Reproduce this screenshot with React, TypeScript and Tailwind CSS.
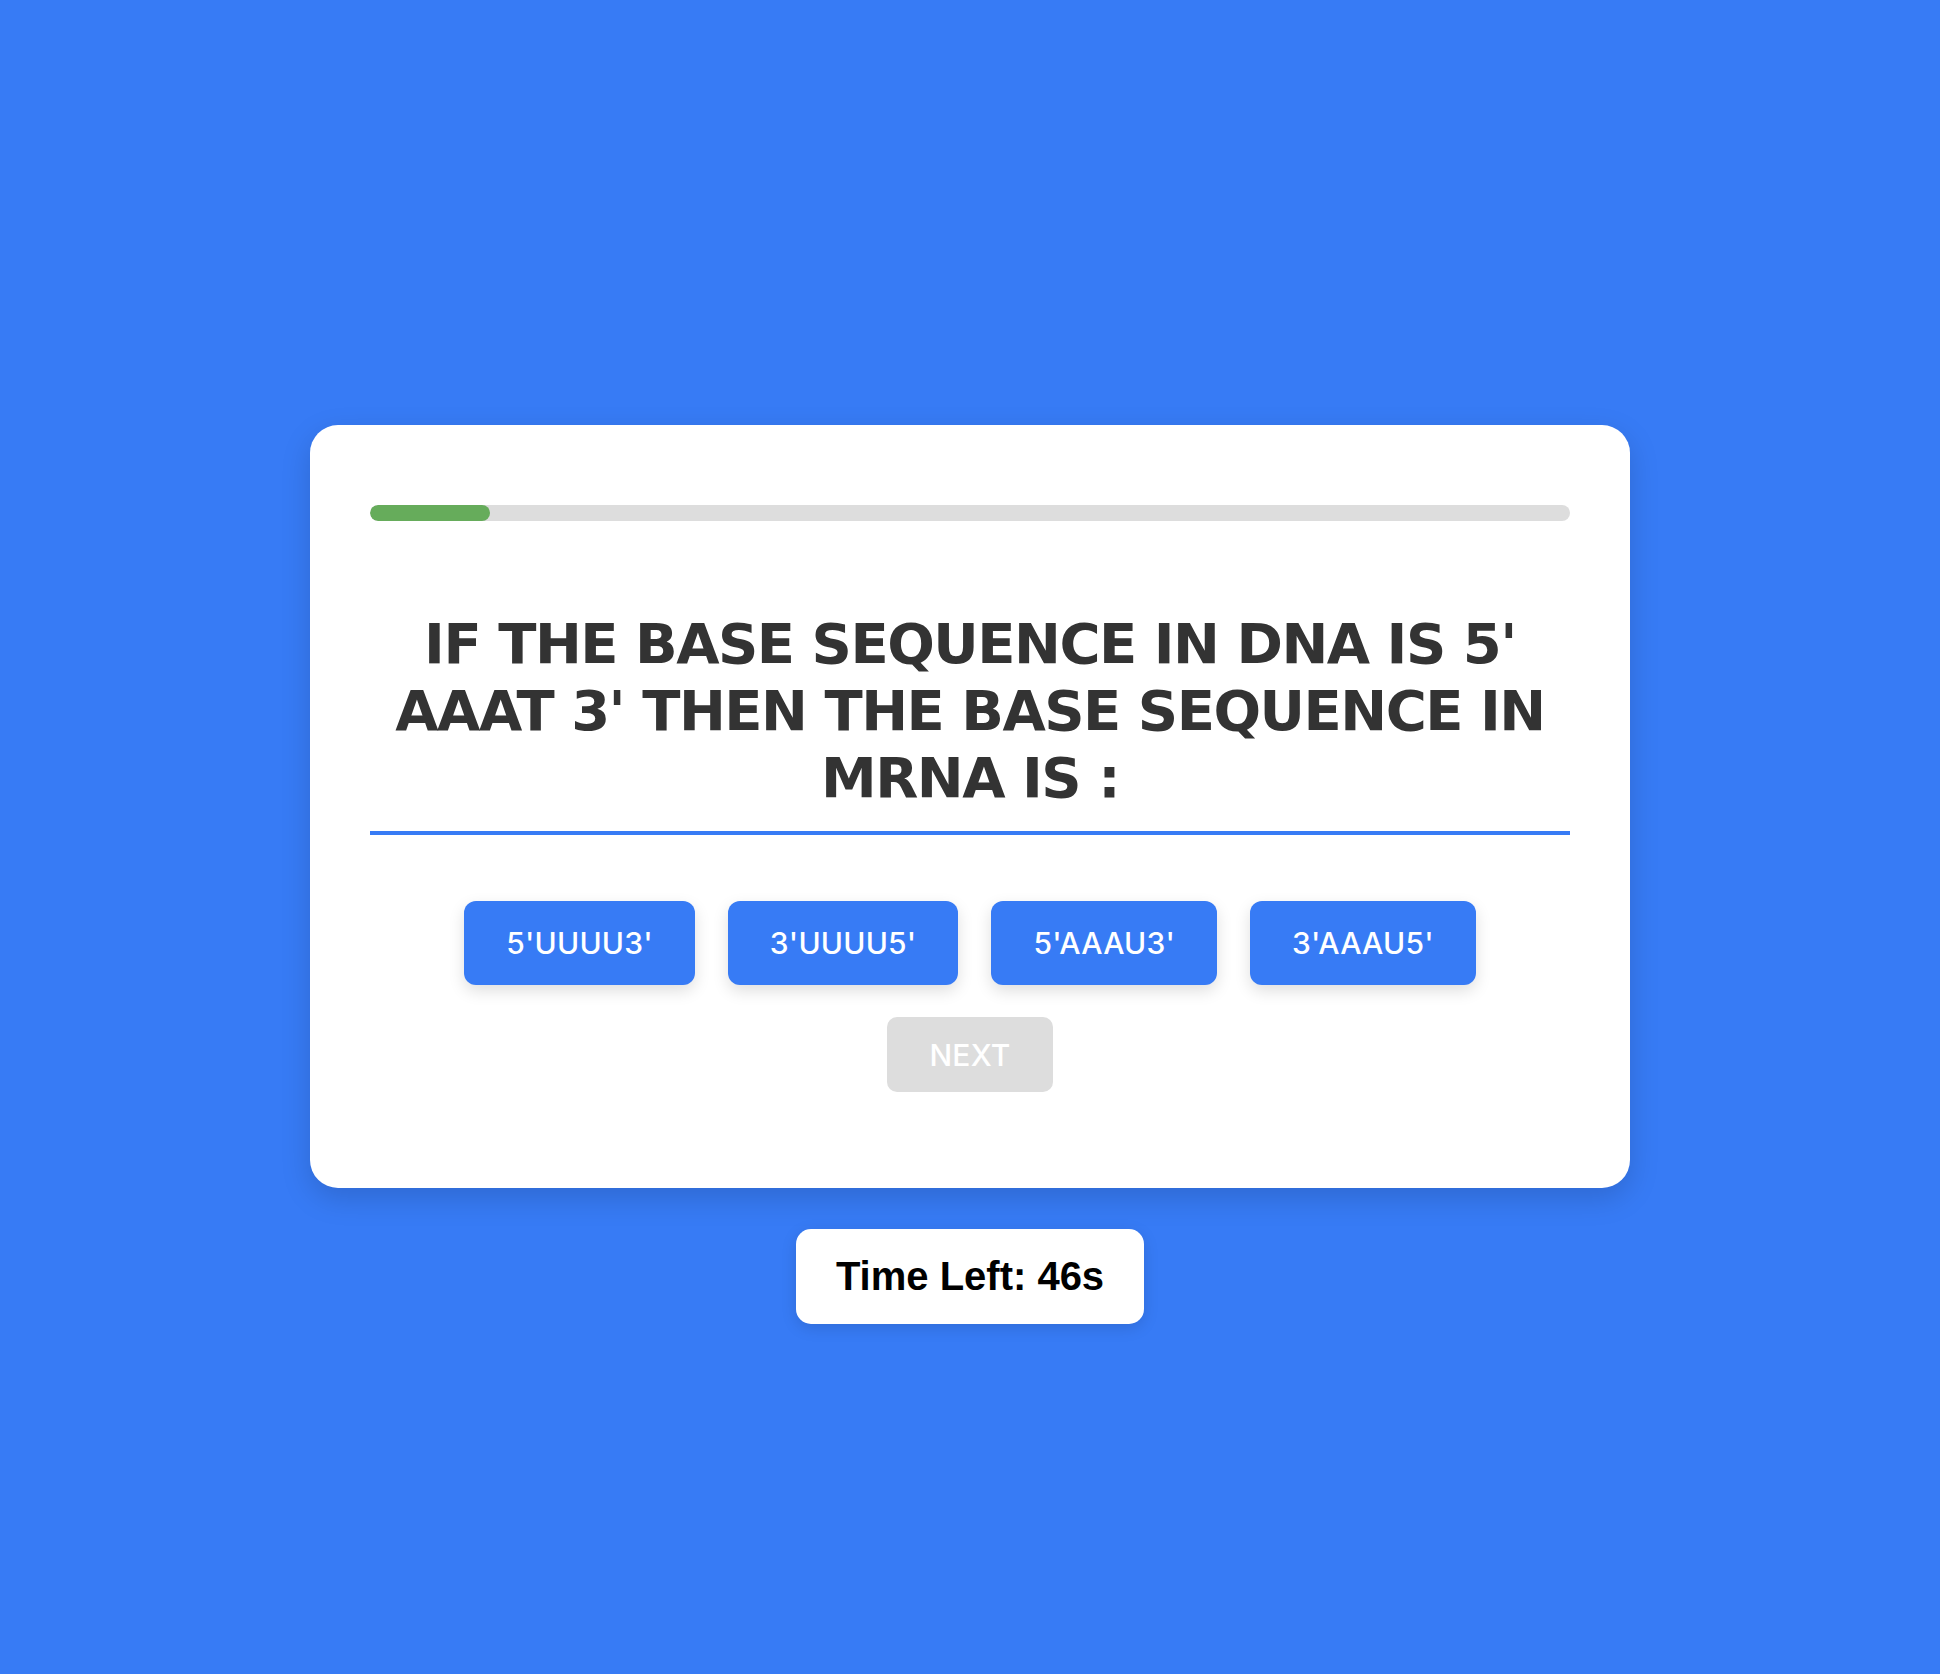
const options = ["5'UUUU3'", "3'UUUU5'", "5'AAAU3'", "3'AAAU5'"];

const QuizCard = () => {
  const progress = 10;

  return (
    <section className="w-[1320px] rounded-[28px] bg-white px-[60px] pt-[80px] pb-[96px] shadow-[0_10px_30px_rgba(0,0,0,0.15)]">
      <div className="h-[16px] w-full overflow-hidden rounded-full bg-[#dddddd]">
        <div
          className="h-full rounded-full bg-[#66ac5b]"
          style={{ width: `${progress}%` }}
        />
      </div>
      <h2 className="mt-[89px] border-b-4 border-[#377bf5] pb-[20px] text-center font-['DejaVu_Sans',Verdana,sans-serif] text-[56px] leading-[67px] font-bold tracking-[-1.5px] text-[#333333] uppercase">
        If the base sequence in DNA is 5' AAAT 3' then the base sequence in
        mRNA is :
      </h2>
      <div className="mt-[66px] flex justify-center gap-[33px]">
        {options.map((opt) => (
          <button
            key={opt}
            type="button"
            className="h-[84px] rounded-[12px] bg-[#377bf5] px-[42px] font-['Inter',sans-serif] text-[30px] leading-[36px] font-medium tracking-[0.2px] text-white shadow-[0_6px_16px_rgba(0,0,0,0.13)]"
          >
            {opt}
          </button>
        ))}
      </div>
      <div className="mt-[32px] flex justify-center">
        <button
          type="button"
          disabled
          className="h-[75px] rounded-[10px] bg-[#dddddd] px-[42px] font-['Inter',sans-serif] text-[30px] leading-[36px] font-medium tracking-[0.2px] text-white"
        >
          NEXT
        </button>
      </div>
    </section>
  );
};

export default function App() {
  return (
    <main className="flex min-h-screen flex-col items-center justify-center bg-[#377bf5] pt-[75px]">
      <QuizCard />
      <div className="mt-[41px] rounded-[15px] bg-white px-[40px] py-[24px] font-['Liberation_Sans',Arial,sans-serif] text-[40px] leading-[47px] font-bold text-black shadow-[0_4px_16px_rgba(0,0,0,0.12)]">
        Time Left: 46s
      </div>
    </main>
  );
}
